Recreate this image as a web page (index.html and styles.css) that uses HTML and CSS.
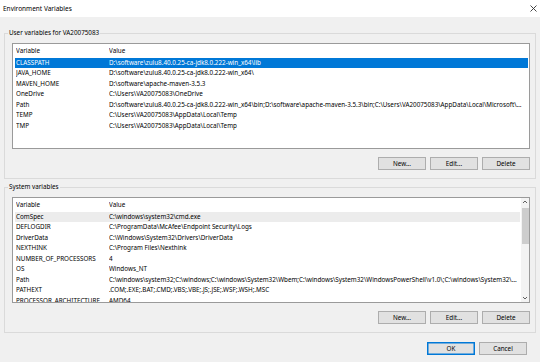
FILE: index.html
```html
<!DOCTYPE html>
<html lang="en">
<head>
  <meta charset="UTF-8" />
  <title>Environment Variables</title>
  <link rel="stylesheet" href="styles.css">
</head>
<body>
  <div class="titlebar">
    <span class="title">Environment Variables</span>
    <svg class="close" width="7" height="7" viewBox="0 0 7 7">
      <path d="M0.5 0.5 L6.5 6.5 M6.5 0.5 L0.5 6.5" stroke="#333" stroke-width="0.9" fill="none"/>
    </svg>
  </div>

  <div class="dialog">
    <fieldset class="group">
      <legend>User variables for VA20075083</legend>
      <div class="listbox">
        <div class="rows">
          <div class="row head"><span class="var">Variable</span><span class="val">Value</span></div>
          <div class="row selected"><span class="var">CLASSPATH</span><span class="val">D:\software\zulu8.40.0.25-ca-jdk8.0.222-win_x64\lib</span></div>
          <div class="row"><span class="var">JAVA_HOME</span><span class="val">D:\software\zulu8.40.0.25-ca-jdk8.0.222-win_x64\</span></div>
          <div class="row"><span class="var">MAVEN_HOME</span><span class="val">D:\software\apache-maven-3.5.3</span></div>
          <div class="row"><span class="var">OneDrive</span><span class="val">C:\Users\VA20075083\OneDrive</span></div>
          <div class="row"><span class="var">Path</span><span class="val">D:\software\zulu8.40.0.25-ca-jdk8.0.222-win_x64\bin;D:\software\apache-maven-3.5.3\bin;C:\Users\VA20075083\AppData\Local\Microsoft\WindowsApps;</span></div>
          <div class="row"><span class="var">TEMP</span><span class="val">C:\Users\VA20075083\AppData\Local\Temp</span></div>
          <div class="row"><span class="var">TMP</span><span class="val">C:\Users\VA20075083\AppData\Local\Temp</span></div>
        </div>
      </div>
      <div class="buttons">
        <button class="btn">New...</button>
        <button class="btn">Edit...</button>
        <button class="btn">Delete</button>
      </div>
    </fieldset>

    <fieldset class="group system">
      <legend>System variables</legend>
      <div class="listbox">
        <div class="rows">
          <div class="row head"><span class="var">Variable</span><span class="val">Value</span></div>
          <div class="row inactive"><span class="var">ComSpec</span><span class="val">C:\windows\system32\cmd.exe</span></div>
          <div class="row"><span class="var">DEFLOGDIR</span><span class="val">C:\ProgramData\McAfee\Endpoint Security\Logs</span></div>
          <div class="row"><span class="var">DriverData</span><span class="val">C:\Windows\System32\Drivers\DriverData</span></div>
          <div class="row"><span class="var">NEXTHINK</span><span class="val">C:\Program Files\Nexthink</span></div>
          <div class="row"><span class="var">NUMBER_OF_PROCESSORS</span><span class="val">4</span></div>
          <div class="row"><span class="var">OS</span><span class="val">Windows_NT</span></div>
          <div class="row"><span class="var">Path</span><span class="val">C:\windows\system32;C:\windows;C:\windows\System32\Wbem;C:\windows\System32\WindowsPowerShell\v1.0\;C:\windows\System32\OpenSSH\</span></div>
          <div class="row"><span class="var">PATHEXT</span><span class="val">.COM;.EXE;.BAT;.CMD;.VBS;.VBE;.JS;.JSE;.WSF;.WSH;.MSC</span></div>
          <div class="row"><span class="var">PROCESSOR_ARCHITECTURE</span><span class="val">AMD64</span></div>
        </div>
        <div class="scrollbar">
          <svg class="arrow" width="8" height="8" viewBox="0 0 8 8"><path d="M2 5 L4 3 L6 5" stroke="#606060" stroke-width="1" fill="none"/></svg>
          <div class="track"><div class="thumb"></div></div>
          <svg class="arrow" width="8" height="8" viewBox="0 0 8 8"><path d="M2 3 L4 5 L6 3" stroke="#606060" stroke-width="1" fill="none"/></svg>
        </div>
      </div>
      <div class="buttons">
        <button class="btn">New...</button>
        <button class="btn">Edit...</button>
        <button class="btn">Delete</button>
      </div>
    </fieldset>

    <div class="dialog-buttons">
      <button class="btn default">OK</button>
      <button class="btn">Cancel</button>
    </div>
  </div>
</body>
</html>
```

FILE: styles.css
```css
body {
  margin: 0;
  font-family: "Noto Sans", "Open Sans", sans-serif;
  font-size: 6.3px;
  color: #000;
  background-color: #f0f0f0;
  width: 540px;
  height: 362px;
  overflow: hidden;
}
.titlebar {
  height: 17px;
  background-color: #fff;
  display: flex;
  align-items: center;
  justify-content: space-between;
  padding: 0 3px 0 3px;
}
.title {
  font-size: 6.5px;
  line-height: 10px;
}
.close {
  display: block;
  margin-top: -1px;
}
.dialog {
  padding: 11px 4px 0 4px;
}
.group {
  margin: 0;
  padding: 5px 5px 8px 7px;
  border: 1px solid #dadada;
  min-width: 0;
}
.group.system {
  margin-top: 3px;
}
.group legend {
  padding: 0 1px;
  margin-left: -4px;
  line-height: 10px;
  height: 10px;
}
.listbox {
  height: 104px;
  border: 1px solid #9a9a9a;
  background-color: #fff;
  display: flex;
  overflow: hidden;
}
.rows {
  flex: 1;
  min-width: 0;
  padding: 0 1px 0 2px;
}
.row {
  display: flex;
  height: 10.57px;
  line-height: 10.57px;
  padding-left: 1px;
  white-space: nowrap;
}
.row.head {
  height: 13.5px;
  line-height: 13.5px;
}
.row .var {
  width: 93px;
  flex-shrink: 0;
  overflow: hidden;
}
.row .val {
  flex: 1;
  min-width: 0;
  overflow: hidden;
  text-overflow: ellipsis;
  padding-right: 3px;
}
.row.selected {
  background-color: #0078d7;
  color: #fff;
}
.row.inactive {
  background-color: #ececec;
}
.scrollbar {
  width: 8px;
  display: flex;
  flex-direction: column;
  background-color: #f3f3f3;
}
.arrow {
  display: block;
  flex-shrink: 0;
}
.track {
  flex: 1;
  padding: 2px 0;
}
.thumb {
  height: 36px;
  margin: 0 0.5px;
  background-color: #cdcdcd;
}
.buttons,
.dialog-buttons {
  display: flex;
  justify-content: flex-end;
  gap: 4px;
  margin-top: 8px;
}
.dialog-buttons {
  margin-top: 9px;
  padding-right: 9px;
}
.btn {
  width: 48px;
  height: 13px;
  padding: 0;
  font-family: inherit;
  font-size: 6.3px;
  color: #000;
  background-color: #e1e1e1;
  border: 1px solid #adadad;
  border-radius: 0;
}
.btn.default {
  border-color: #0078d7;
  box-shadow: inset 0 0 0 0.5px #0078d7;
}
```
